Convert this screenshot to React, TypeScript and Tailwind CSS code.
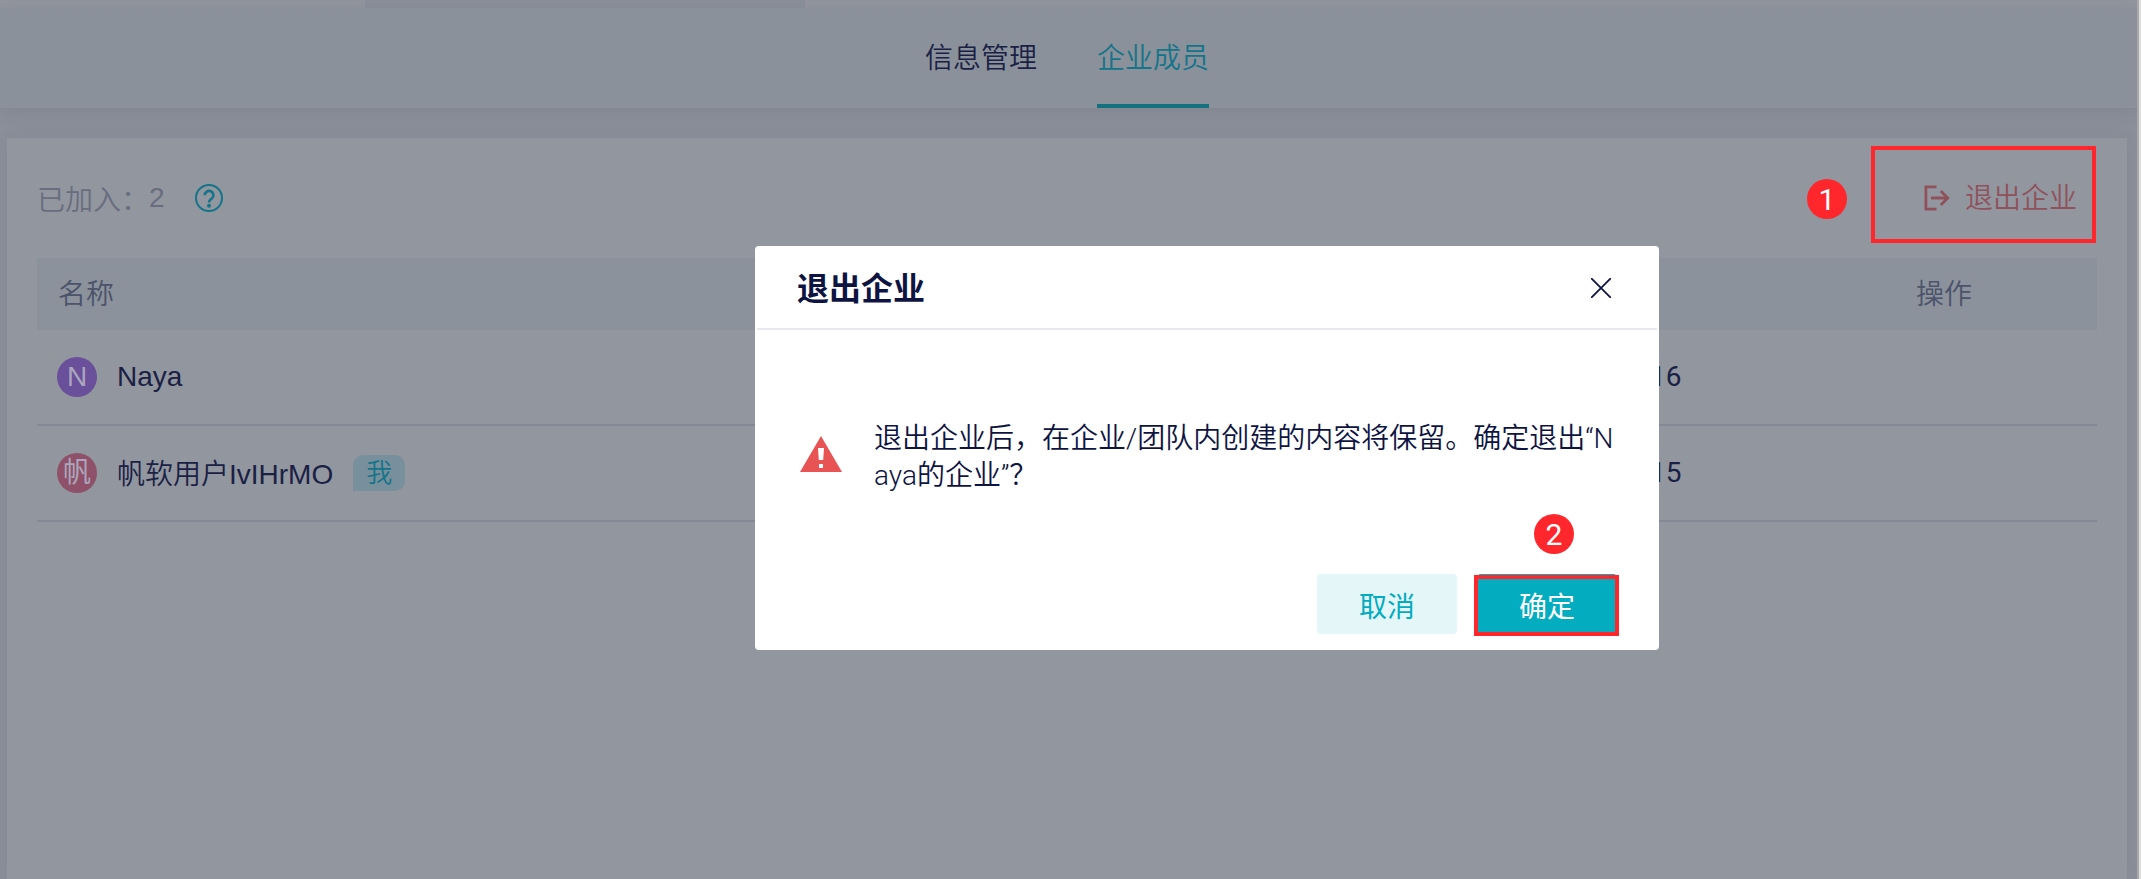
import React from 'react';

const members = [
  { initial: 'N', name: 'Naya', color: 'bg-[#6a4f9b]', day: '16', me: false },
  { initial: '帆', name: '帆软用户IvIHrMO', color: 'bg-[#8f5169]', day: '15', me: true },
];

const HelpIcon = () => (
  <svg className="w-7 h-7" viewBox="0 0 28 28" fill="none" stroke="#14748a" strokeWidth="2">
    <circle cx="14" cy="14" r="13" />
    <path d="M9.8 11.2a4.3 4.3 0 1 1 7 3.3c-1.8 1.4-2.8 2-2.8 4" strokeWidth="2.6" />
    <circle cx="14" cy="21.8" r="2" fill="#14748a" stroke="none" />
  </svg>
);

const ExitIcon = () => (
  <svg className="w-[26px] h-[26px]" viewBox="0 0 26 26" fill="none" stroke="#8f525c" strokeWidth="2.8">
    <path d="M12.5 1.8H1.9v22.4h10.6" />
    <path d="M7 13h17M16.8 6l7 7-7 7" />
  </svg>
);

const WarningIcon = () => (
  <svg className="w-[42px] h-9" viewBox="0 0 42 36">
    <path d="M21 0L42 36H0z" fill="#e85353" />
    <path d="M18 12h6l-.8 12h-4.4zM19 28h4v4h-4z" fill="#fff" />
  </svg>
);

const CloseIcon = () => (
  <svg className="w-5 h-5" viewBox="0 0 20 20" stroke="#0e1442" strokeWidth="1.8">
    <path d="M0 0l20 20M20 0L0 20" />
  </svg>
);

const StepBadge = ({ step, className }: { step: number; className: string }) => (
  <div className={`absolute w-10 h-10 rounded-full bg-[#ff272c] text-white text-[30px] font-normal leading-[41px] text-center font-['Roboto',sans-serif] ${className}`}>
    {step}
  </div>
);

const App = () => {
  return (
    <div className="relative flex w-[2141px] h-[879px] overflow-hidden text-[28px] leading-none font-[350] text-[#1a2145] font-['Liberation_Sans','Noto_Sans_CJK_SC',sans-serif]">
      <div className="flex flex-col w-[2137px] bg-[#8b8f9a]">
        <div className="flex h-2 bg-[#92959e]">
          <div className="ml-[365px] w-[440px] bg-[#8a8f9a]" />
        </div>

        <nav className="flex justify-center gap-[60px] h-[100px] pr-[3px] bg-[#8a919a] shadow-[0_4px_16px_rgba(40,60,75,0.12)]">
          <div className="leading-[102px]">信息管理</div>
          <div className="leading-[102px] h-[100px] text-[#14748a] border-b-4 border-[#12707f]">企业成员</div>
        </nav>

        <main className="mt-[30px] ml-[7px] w-[2120px] grow px-[30px] bg-[#92969e] shadow-[0_0_16px_rgba(40,50,75,0.07)]">
          <div className="flex items-center justify-between h-[120px]">
            <div className="flex items-center text-[#686d80]">
              <span className="pt-1.5">已加入：</span>
              <span>2</span>
              <span className="ml-[30px]"><HelpIcon /></span>
            </div>
            <div className="flex items-center gap-[15px] pr-5 text-[#8f525c]">
              <ExitIcon />
              <span className="pt-0.5">退出企业</span>
            </div>
          </div>

          <div className="flex items-center h-[72px] pt-0.5 bg-[#8b929b] text-[#4c536b]">
            <div className="w-[1879px] pl-[21px]">名称</div>
            <div>操作</div>
          </div>

          {members.map((m) => (
            <div key={m.name} className="flex items-center h-24 pl-5 border-b-2 border-[#858995]">
              <div className="flex items-center w-[1593px]">
                <div className={`w-10 h-10 rounded-full text-center leading-10 font-normal text-[#aba6bb] ${m.color}`}>{m.initial}</div>
                <span className={m.me ? 'ml-5 pt-1' : 'ml-5'}>{m.name}</span>
                {m.me && (
                  <span className="ml-5 w-[52px] h-9 rounded-[10px] rounded-bl-none bg-[#78909b] text-[#14748a] text-[26px] leading-9 text-center">我</span>
                )}
              </div>
              <span className="font-normal font-['Roboto',sans-serif]">{m.day}</span>
            </div>
          ))}
        </main>
      </div>
      <div className="w-0.5 bg-[#a8a8a8]" />
      <div className="w-0.5 bg-[#dddddd]" />

      {/* confirm dialog */}
      <div className="absolute left-[755px] top-[246px] w-[904px] h-[404px] flex flex-col px-0.5 rounded-[4px] bg-white text-[#0e1442]">
        <div className="flex items-center justify-between h-[84px] pt-0.5 pl-10 pr-[46px] border-b-2 border-[#e8e8ef]">
          <h2 className="pt-px text-[32px] font-bold">退出企业</h2>
          <CloseIcon />
        </div>
        <div className="flex items-start grow pl-[43px] pt-[90px]">
          <span className="pt-4"><WarningIcon /></span>
          <p className="ml-8 w-[742px] leading-[37px] break-all font-['Roboto','Noto_Sans_CJK_SC',sans-serif]">退出企业后，在企业/团队内创建的内容将保留。确定退出“Naya的企业”？</p>
        </div>
        <div className="flex justify-end gap-5 pr-10 pb-4 font-normal">
          <button className="w-[140px] h-[60px] pt-2 rounded-[4px] bg-[#e5f6f9] text-[#03acbf]">取消</button>
          <button className="w-[140px] h-[60px] pt-2 rounded-[4px] bg-[#03acbf] text-white">确定</button>
        </div>
      </div>

      {/* step annotations */}
      <StepBadge step={1} className="left-[1807px] top-[179px]" />
      <div className="absolute left-[1871px] top-[146px] w-[225px] h-[97px] border-4 border-[#ff272c]" />
      <StepBadge step={2} className="left-[1534px] top-[514px]" />
      <div className="absolute left-[1474px] top-[575px] w-[145px] h-[61px] border-4 border-[#ff272c]" />
    </div>
  );
};

export default App;
